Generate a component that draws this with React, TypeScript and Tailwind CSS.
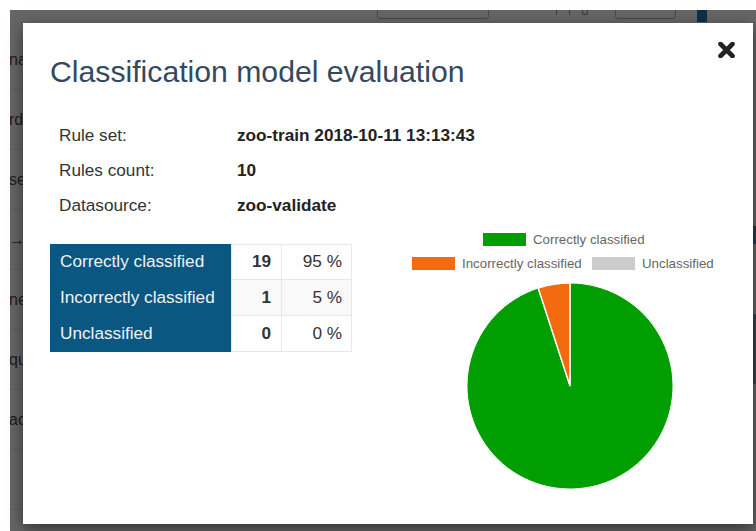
import React from "react";

const sideItems = ["na", "rd", "se", "→", "ne", "qu", "ac", ""];

const rows = [
  { label: "Correctly classified", count: 19, pct: "95 %" },
  { label: "Incorrectly classified", count: 1, pct: "5 %" },
  { label: "Unclassified", count: 0, pct: "0 %" },
];

const info = [
  { label: "Rule set:", value: "zoo-train 2018-10-11 13:13:43" },
  { label: "Rules count:", value: "10" },
  { label: "Datasource:", value: "zoo-validate" },
];

function PieChart() {
  const cx = 187;
  const cy = 161;
  const r = 103;
  const a = (-18 * Math.PI) / 180;
  const ex = cx + r * Math.sin(a);
  const ey = cy - r * Math.cos(a);
  return (
    <svg width="370" height="280" viewBox="0 0 370 280" className="block">
      <g fontFamily="'Liberation Sans', Arial, sans-serif" fontSize="13.3" fill="#666">
        <rect x="100" y="8" width="43" height="13" fill="#009e00" />
        <text x="150" y="18.8">Correctly classified</text>
        <rect x="29" y="32" width="43" height="13" fill="#f46a0f" />
        <text x="79" y="42.8">Incorrectly classified</text>
        <rect x="209" y="32" width="43" height="13" fill="#cccccc" />
        <text x="259" y="42.8">Unclassified</text>
      </g>
      <path
        d={`M${cx},${cy} L${cx},${cy - r} A${r},${r} 0 1 1 ${ex},${ey} Z`}
        fill="#009e00"
        stroke="#fff"
        strokeWidth="1"
      />
      <path
        d={`M${cx},${cy} L${ex},${ey} A${r},${r} 0 0 1 ${cx},${cy - r} Z`}
        fill="#f46a0f"
        stroke="#fff"
        strokeWidth="1.5"
      />
    </svg>
  );
}

export default function App() {
  return (
    <div className="relative w-[756px] h-[531px] overflow-hidden bg-white pl-[10px] pt-[10px] font-['Liberation_Sans',Arial,sans-serif]">
      {/* page behind the dimmed backdrop */}
      <div className="h-full bg-[#666] overflow-hidden flex flex-col">
        <div className="h-[10px] flex items-end shrink-0">
          <div className="ml-[367px] w-[112px] h-[30px] border border-[#474747] rounded-[3px] mb-[1px]" />
          {/* descenders of the pager caption */}
          <div className="ml-[67px] flex items-start self-start gap-[12px]">
            <div className="w-[1px] h-[5px] bg-[#3a3a3a]" />
            <div className="w-[1px] h-[5px] bg-[#3a3a3a]" />
            <div className="w-[6px] h-[5px] border-b border-l border-r border-[#3a3a3a] rounded-b-[3px]" />
          </div>
          <div className="ml-[27px] w-[61px] h-[30px] border border-[#474747] rounded-[3px] mb-[1px]" />
          <div className="ml-[21px] w-[10px] h-[12px] self-start bg-[#0e2f47]" />
        </div>
        <div className="flex flex-1">
          <div className="w-[60px] flex flex-col pt-[10px]">
            {sideItems.map((t, i) => (
              <div
                key={i}
                className="h-[60px] shrink-0 flex items-center border-b border-[#5e5e5e] text-[16px] text-[#1c1c1c] -ml-[1px] whitespace-nowrap"
              >
                {t}
              </div>
            ))}
          </div>
          <div className="flex-1" />
          <div className="w-[60px] flex flex-col text-[15px] text-[#1a1a1a] leading-[20px] pl-[43px]">
            <span>g</span>
            <span>a</span>
            <span>s</span>
            <span>i</span>
            <span>u</span>
            <span>l</span>
            <span>e</span>
            <span>l</span>
            <span>o</span>
            <span>r</span>
            <div className="h-[18px] -ml-[43px] bg-[#2b3a48] mt-[6px]" />
            <span className="mt-[10px]">r</span>
            <span>e</span>
            <div className="h-[70px] -ml-[43px] bg-[#38444f] mt-[20px]" />
          </div>
        </div>
      </div>

      {/* modal dialog */}
      <div className="absolute left-[23px] top-[23px] w-[730px] h-[501px] bg-white shadow-[0_5px_15px_rgba(0,0,0,0.5)] pl-[27px] pt-[32px]">
        <button className="absolute left-[695px] top-[19px] w-[17px] h-[16px]" aria-label="Close">
          <svg width="17" height="16" viewBox="0 0 17 16">
            <path d="M2.5 2 L14.5 14 M14.5 2 L2.5 14" stroke="#222" strokeWidth="4.6" strokeLinecap="round" />
          </svg>
        </button>

        <h2 className="text-[30.2px] leading-[33px] text-[#34495e] font-normal">
          Classification model evaluation
        </h2>

        <div className="mt-[30px] ml-[9px] grid grid-cols-[178px_auto] text-[17.2px] text-[#333]">
          {info.map((r) => (
            <React.Fragment key={r.label}>
              <div className="h-[35px] flex items-center">{r.label}</div>
              <div className="h-[35px] flex items-center font-bold text-[#222]">{r.value}</div>
            </React.Fragment>
          ))}
        </div>

        <div className="mt-[21px] flex items-start">
          <div className="flex flex-col text-[17.2px]">
            {rows.map((r, i) => (
              <div key={r.label} className="flex h-[36px]">
                <div className="w-[181px] bg-[#0a5781] text-[#f2f2f2] pl-[10px] flex items-center">
                  {r.label}
                </div>
                <div
                  className={`w-[50px] flex items-center justify-end pr-[10px] font-bold text-[#333] border-l border-b border-[#e8e8e8] ${
                    i === 0 ? "border-t" : ""
                  } ${i === 1 ? "bg-[#f9f9f9]" : "bg-white"}`}
                >
                  {r.count}
                </div>
                <div
                  className={`w-[71px] flex items-center justify-end pr-[9px] text-[#333] border-l border-r border-b border-[#e8e8e8] ${
                    i === 0 ? "border-t" : ""
                  } ${i === 1 ? "bg-[#f9f9f9]" : "bg-white"}`}
                >
                  {r.pct}
                </div>
              </div>
            ))}
          </div>
          <div className="ml-[31px] -mt-[19px]">
            <PieChart />
          </div>
        </div>
      </div>
    </div>
  );
}
